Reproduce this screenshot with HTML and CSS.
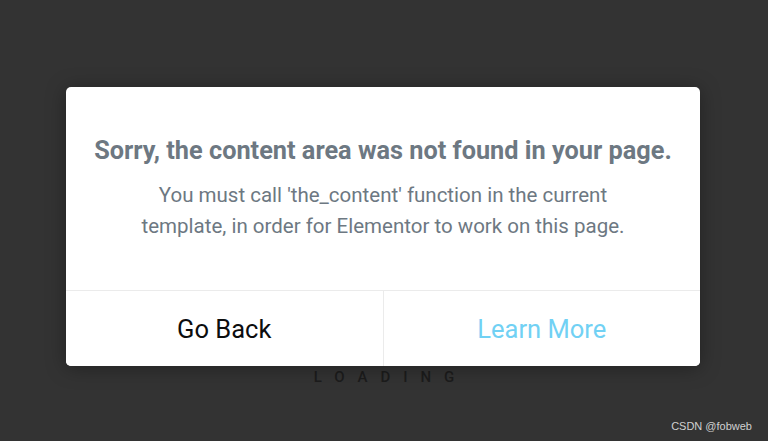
FILE: index.html
```html
<!DOCTYPE html>
<html>
<head>
<meta charset="utf-8">
<link rel="stylesheet" href="styles.css">
</head>
<body>
<div class="screen">
  <div class="loading">LOADING</div>
  <div class="dialog">
    <div class="dialog-body">
      <h1 class="title">Sorry, the content area was not found in your page.</h1>
      <p class="message">You must call 'the_content' function in the current<br>template, in order for Elementor to work on this page.</p>
    </div>
    <div class="actions">
      <button class="btn btn-back">Go Back</button>
      <button class="btn btn-learn">Learn More</button>
    </div>
  </div>
  <div class="watermark">CSDN @fobweb</div>
</div>
</body>
</html>
```
FILE: styles.css
```css
html, body {
  margin: 0;
  padding: 0;
  background: #333333;
}
.screen {
  position: relative;
  width: 768px;
  height: 441px;
  overflow: hidden;
  font-family: Roboto, "Liberation Sans", sans-serif;
  display: flex;
  justify-content: flex-start;
  padding-top: 87px;
  padding-left: 66px;
  box-sizing: border-box;
}
.dialog {
  position: relative;
  z-index: 2;
  width: 634px;
  height: 279px;
  background: #ffffff;
  border-radius: 5px;
  box-shadow: 0 2px 20px rgba(0,0,0,0.35);
  display: flex;
  flex-direction: column;
  overflow: hidden;
}
.dialog-body {
  height: 204px;
  box-sizing: border-box;
  padding-top: 48px;
  text-align: center;
  border-bottom: 1px solid #ebebeb;
}
.title {
  margin: 0;
  font-size: 25.3px;
  font-weight: 700;
  color: #6d7882;
  line-height: 32px;
}
.message {
  margin: 13px 0 0;
  font-size: 20.5px;
  line-height: 31px;
  color: #6d7882;
}
.actions {
  flex: 1;
  display: flex;
}
.btn {
  flex: 1;
  border: none;
  background: #fff;
  font-family: Roboto, "Liberation Sans", sans-serif;
  font-size: 25.5px;
  padding: 0;
}
.btn-back {
  color: #0c0d0e;
  border-right: 1px solid #ebebeb;
}
.btn-learn {
  color: #71d1f4;
}
.loading {
  position: absolute;
  left: 0;
  right: 0;
  top: 368px;
  text-align: center;
  font-size: 15px;
  letter-spacing: 13px;
  padding-left: 13px;
  color: #1c1c1c;
  font-weight: 500;
}
.watermark {
  position: absolute;
  right: 16px;
  bottom: 9px;
  font-family: "Liberation Sans", Arial, sans-serif;
  font-size: 11px;
  color: #d0d0d0;
}
```
